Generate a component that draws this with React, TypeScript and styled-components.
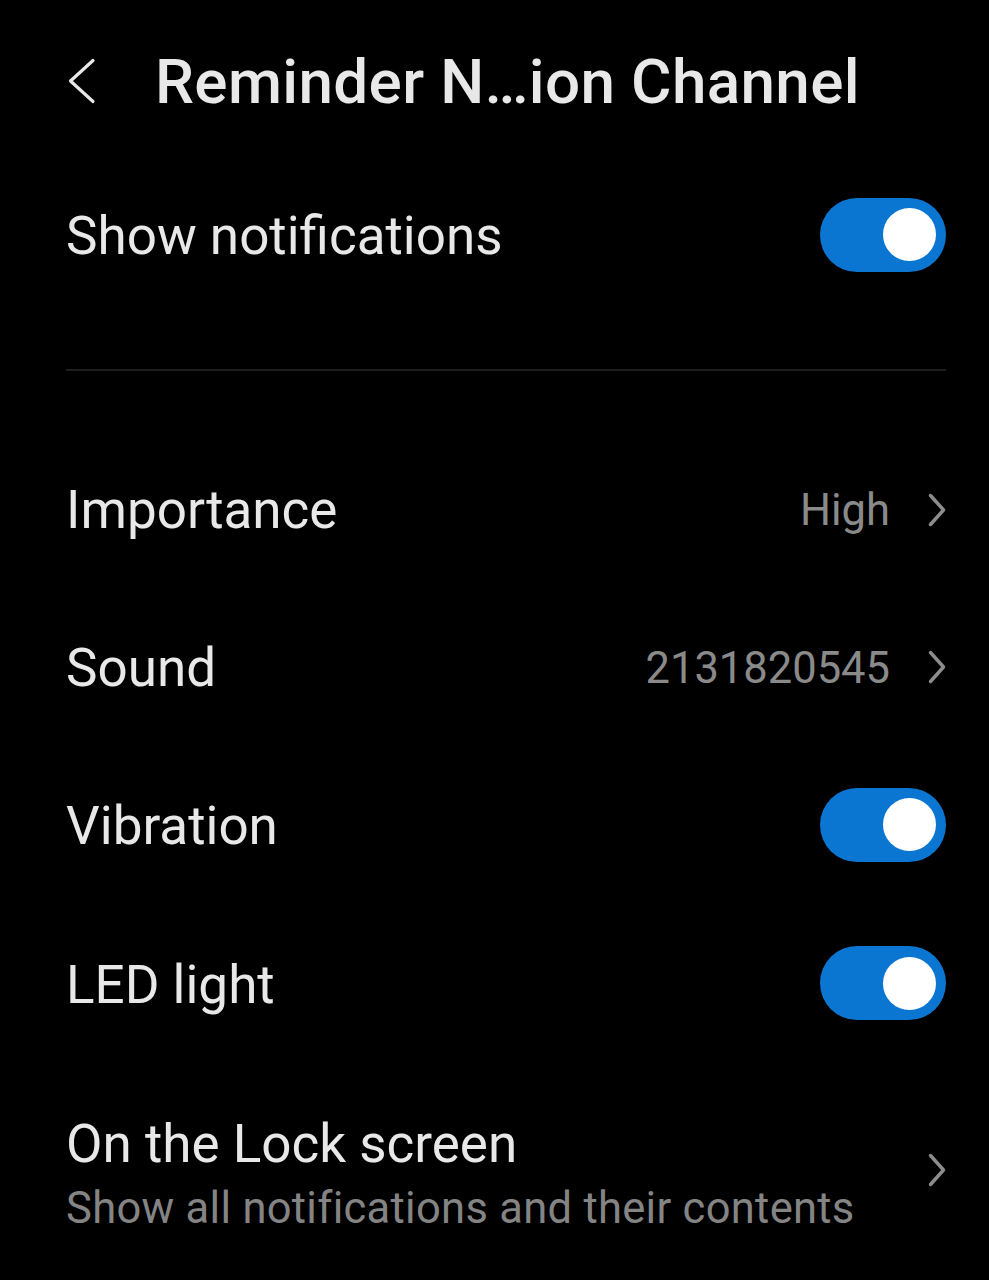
import React from "react";
import styled, { createGlobalStyle } from "styled-components";

const Global = createGlobalStyle`
  html, body { margin: 0; padding: 0; background: #000; }
  body { font-family: Roboto, "Noto Sans", sans-serif; -webkit-font-smoothing: antialiased; }
`;

const Page = styled.div`
  width: 989px;
  height: 1280px;
  overflow: hidden;
  background: #000;
  color: #e8e8e8;
  box-sizing: border-box;
  padding: 0 43px 0 66px;
  display: flex;
  flex-direction: column;
`;

const Header = styled.header`
  height: 162px;
  flex-shrink: 0;
  display: flex;
  align-items: center;
  gap: 59px;
`;

const BackButton = styled.button`
  background: none;
  border: 0;
  padding: 0;
  width: 30px;
  height: 46px;
  display: flex;
  align-items: center;
  justify-content: flex-start;
`;

const Title = styled.h1`
  margin: 0;
  font-size: 62px;
  font-weight: 500;
  letter-spacing: 0.35px;
  color: #e8e8e8;
  white-space: nowrap;
`;

const Row = styled.div<{ $h: number }>`
  height: ${(p) => p.$h}px;
  flex-shrink: 0;
  display: flex;
  align-items: center;
  justify-content: space-between;
`;

const Label = styled.span`
  font-size: 53px;
  font-weight: 400;
  color: #e8e8e8;
  white-space: nowrap;
`;

const TextCol = styled.div`
  display: flex;
  flex-direction: column;
  gap: 8px;
`;

const Sub = styled.span`
  font-size: 43.5px;
  letter-spacing: 0.3px;
  color: #848484;
  white-space: nowrap;
`;

const Trail = styled.div`
  display: flex;
  align-items: center;
  gap: 38px;
`;

const Value = styled.span`
  font-size: 43.5px;
  color: #8a8a8a;
`;

const Divider = styled.hr`
  flex-shrink: 0;
  border: 0;
  height: 2px;
  background: #1e1e1e;
  margin: 59px 0 60px;
`;

const Track = styled.div<{ $on: boolean }>`
  width: 126px;
  height: 74px;
  margin-bottom: 3px;
  border-radius: 37px;
  background: ${(p) => (p.$on ? "#0a76d2" : "#444")};
  display: flex;
  align-items: center;
  justify-content: ${(p) => (p.$on ? "flex-end" : "flex-start")};
  padding: 0 10px;
  box-sizing: border-box;
`;

const Knob = styled.div`
  width: 53px;
  height: 53px;
  border-radius: 50%;
  background: #fff;
`;

const ChevronBox = styled.span<{ $lift?: number }>`
  display: flex;
  margin-bottom: ${(p) => p.$lift ?? 0}px;
`;

const Toggle = ({ on }: { on: boolean }) => (
  <Track $on={on}>
    <Knob />
  </Track>
);

const Chevron = ({ lift }: { lift?: number }) => (
  <ChevronBox $lift={lift}>
    <svg width="18" height="34" viewBox="0 0 18 34" fill="none">
      <path d="M2.5 2.5 L15.5 17 L2.5 31.5" stroke="#8c8c8c" strokeWidth="3.4" strokeLinecap="round" strokeLinejoin="round" />
    </svg>
  </ChevronBox>
);

export default function App() {
  return (
    <>
      <Global />
      <Page>
        <Header>
          <BackButton aria-label="Back">
            <svg width="30" height="46" viewBox="0 0 30 46" fill="none">
              <path d="M27 2.5 L4.5 23 L27 43.5" stroke="#e8e8e8" strokeWidth="3.2" strokeLinecap="round" strokeLinejoin="round" />
            </svg>
          </BackButton>
          <Title>Reminder N…ion Channel</Title>
        </Header>
        <Row $h={148}>
          <Label>Show notifications</Label>
          <Toggle on />
        </Row>
        <Divider />
        <Row $h={158}>
          <Label>Importance</Label>
          <Trail>
            <Value>High</Value>
            <Chevron />
          </Trail>
        </Row>
        <Row $h={158}>
          <Label>Sound</Label>
          <Trail>
            <Value>2131820545</Value>
            <Chevron lift={3} />
          </Trail>
        </Row>
        <Row $h={158}>
          <Label>Vibration</Label>
          <Toggle on />
        </Row>
        <Row $h={159}>
          <Label>LED light</Label>
          <Toggle on />
        </Row>
        <Row $h={218}>
          <TextCol>
            <Label>On the Lock screen</Label>
            <Sub>Show all notifications and their contents</Sub>
          </TextCol>
          <Chevron lift={7} />
        </Row>
      </Page>
    </>
  );
}
